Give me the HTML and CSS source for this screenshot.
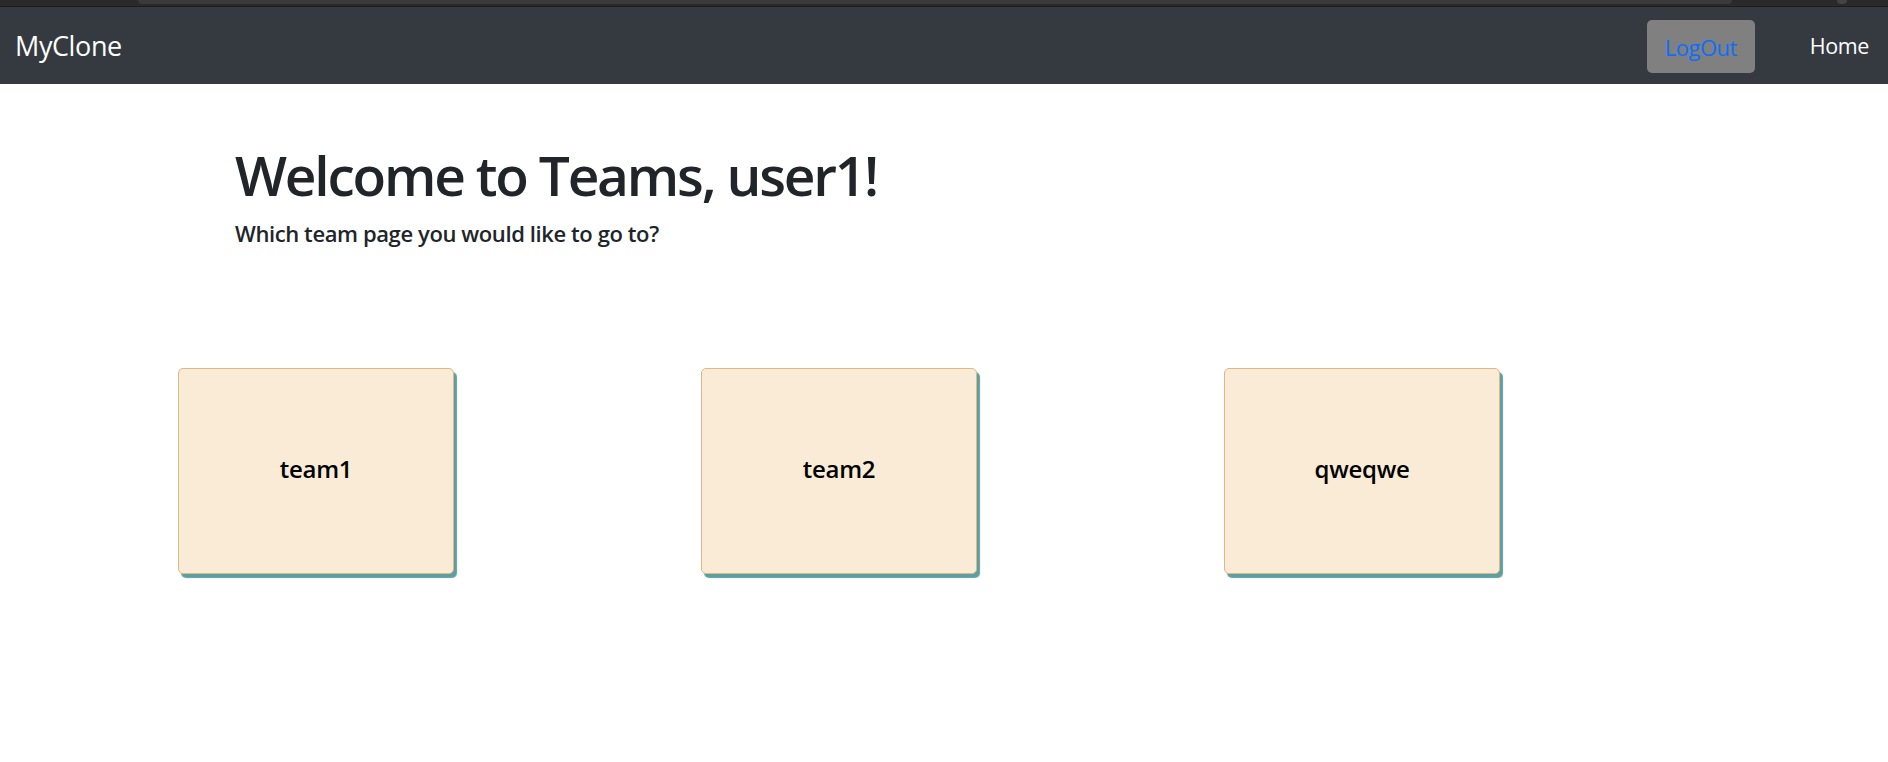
FILE: index.html
```html
<!DOCTYPE html>
<html lang="en">
<head>
<meta charset="utf-8">
<title>MyClone</title>
<link rel="stylesheet" href="styles.css">
</head>
<body>
<div class="chrome"><div class="chrome-bar"></div><div class="chrome-dot"></div></div>
<nav class="navbar">
  <a class="brand" href="#">MyClone</a>
  <div class="nav-right">
    <button class="logout">LogOut</button>
    <a class="nav-link" href="#">Home</a>
  </div>
</nav>
<main>
  <section class="intro">
    <h1 class="title">Welcome to Teams, user1!</h1>
    <h5 class="subtitle">Which team page you would like to go to?</h5>
  </section>
  <section class="teams">
    <div class="team-card">team1</div>
    <div class="team-card">team2</div>
    <div class="team-card">qweqwe</div>
  </section>
</main>
</body>
</html>
```
FILE: styles.css
```css
* { box-sizing: border-box; }
html, body { margin: 0; padding: 0; }
body {
  font-family: "Open Sans", "Noto Sans", "Liberation Sans", sans-serif;
  background: #fff;
  color: #212529;
}
.chrome {
  height: 7px;
  background: #2a2a2a;
  display: flex;
  align-items: flex-start;
  padding-left: 138px;
  border-bottom: 1px solid #1c1c1c;
}
.chrome-bar {
  width: 1594px;
  height: 4px;
  background: #3a3a3a;
  border-radius: 0 0 6px 6px;
}
.chrome-dot {
  width: 10px;
  height: 4px;
  margin-left: 105px;
  background: #444;
  border-radius: 0 0 5px 5px;
}
.navbar {
  height: 77px;
  background: #343a40;
  display: flex;
  align-items: center;
  justify-content: space-between;
  padding: 0 19px 0 15px;
}
.brand {
  color: #fff;
  text-decoration: none;
  font-size: 27px;
  letter-spacing: -0.4px;
}
.nav-right {
  display: flex;
  align-items: center;
  gap: 55px;
}
.logout {
  width: 108px;
  height: 53px;
  background: #808080;
  border: none;
  border-radius: 5px;
  color: #0d6efd;
  font-family: inherit;
  font-size: 22px;
  letter-spacing: -0.5px;
  padding: 0;
  margin-top: 2px;
}
.nav-link {
  color: #fff;
  text-decoration: none;
  font-size: 21.5px;
  letter-spacing: -0.4px;
}
.intro {
  padding: 58px 0 0 235px;
}
.title {
  margin: 0;
  font-size: 55px;
  font-weight: 600;
  line-height: 1.2;
  letter-spacing: -2.2px;
}
.subtitle {
  margin: 12px 0 0;
  font-size: 22px;
  font-weight: 600;
  line-height: 1.2;
  letter-spacing: -0.4px;
}
.teams {
  display: flex;
  gap: 247px;
  padding: 122px 0 8px 178px;
}
.team-card {
  width: 276px;
  height: 206px;
  padding-bottom: 6px;
  background: #faebd7;
  border: 1px solid #deb887;
  border-radius: 5px;
  box-shadow: 3px 4px 1px #5f9ea0;
  display: flex;
  align-items: center;
  justify-content: center;
  font-size: 24px;
  font-weight: 600;
  color: #000;
  letter-spacing: -0.3px;
}
```
